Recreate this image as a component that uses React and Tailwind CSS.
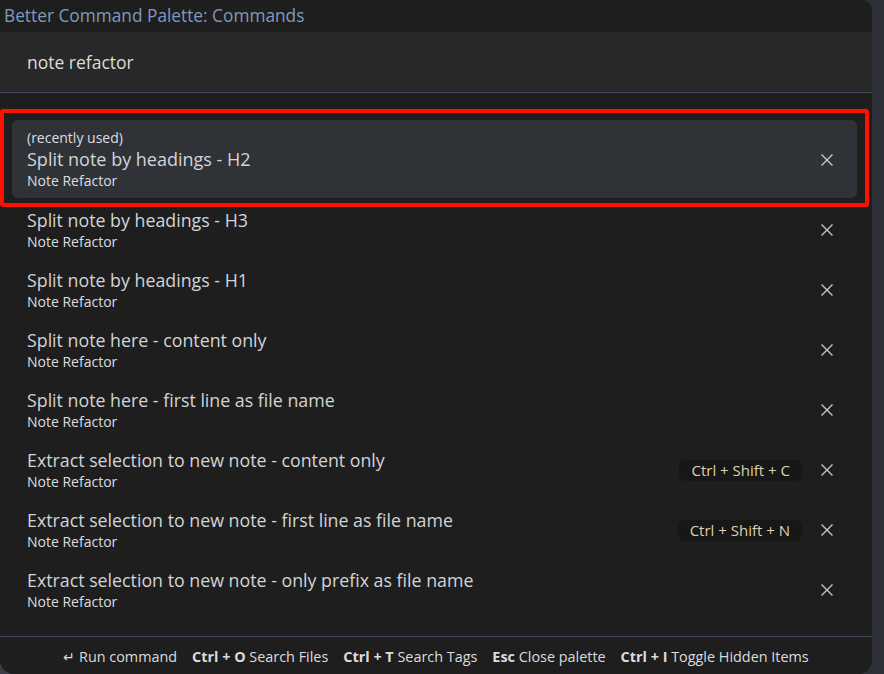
import React from 'react';

const items = [
  { title: 'Split note by headings - H3' },
  { title: 'Split note by headings - H1' },
  { title: 'Split note here - content only' },
  { title: 'Split note here - first line as file name' },
  { title: 'Extract selection to new note - content only', hotkey: 'Ctrl + Shift + C' },
  { title: 'Extract selection to new note - first line as file name', hotkey: 'Ctrl + Shift + N' },
  { title: 'Extract selection to new note - only prefix as file name' },
];

const CloseIcon = () => (
  <svg width="14" height="14" viewBox="0 0 14 14" className="shrink-0">
    <path d="M2 2 L12 12 M12 2 L2 12" stroke="#c4c4c4" strokeWidth="1.4" strokeLinecap="square" />
  </svg>
);

const Hotkey = ({ children }) => (
  <span className="rounded-md bg-[#171717] px-[12px] h-[21px] flex items-center text-[15px] text-[#ddd2ad] mr-[18px]">
    {children}
  </span>
);

const App = () => {
  return (
    <div
      className="w-[884px] h-[674px] bg-gradient-to-r from-[#3b3e46] to-[#2c2f35] overflow-hidden"
      style={{ fontFamily: '"Open Sans", "Noto Sans", sans-serif' }}
    >
      <div className="w-[872px] h-[674px] bg-[#1e1e1e] rounded-tr-[10px] rounded-b-[14px] flex flex-col">
        <div className="h-[32px] px-[4px] flex items-center text-[17.3px] text-[#7e9bbd]">
          Better Command Palette: Commands
        </div>

        <div className="h-[61px] bg-[#282828] border-b border-[#414a5a] flex items-center pl-[27px] text-[17.5px] text-[#dcdcdc]">
          note refactor
        </div>

        <div className="pl-[12px] pr-[15px] pt-[27px] pb-[18px] border-b border-[#414a5a]">
          <div className="relative h-[78px] rounded-md bg-[#2f3337] pl-[15px] pr-[23px] pt-[1px] flex items-center">
            <div className="absolute -left-[12px] -top-[11px] -right-[12px] -bottom-[9px] border-[4px] border-[#ff1100] rounded-[3px] pointer-events-none" />
            <div className="flex-1 flex flex-col text-[#dcdde0]">
              <span className="text-[14px] leading-[18px]">(recently used)</span>
              <span className="text-[18px] leading-[24px] text-[#d2d4d8]">Split note by headings - H2</span>
              <span className="text-[14px] leading-[20px]">Note Refactor</span>
            </div>
            <CloseIcon />
          </div>

          {items.map((item) => (
            <div key={item.title} className="h-[60px] pl-[15px] pr-[23px] pt-[10px] pb-[6px] flex items-center">
              <div className="flex-1 flex flex-col">
                <span className="text-[17.8px] leading-[24px] text-[#d2d4d8]">{item.title}</span>
                <span className="text-[14px] leading-[20px] text-[#dcdde0]">Note Refactor</span>
              </div>
              {item.hotkey && <Hotkey>{item.hotkey}</Hotkey>}
              <CloseIcon />
            </div>
          ))}
        </div>

        <div className="flex-1 flex items-center justify-center gap-[15px] text-[14.4px] text-[#dcdcdc] pt-[3px]">
          <span>↵ Run command</span>
          <span><b>Ctrl + O</b> Search Files</span>
          <span><b>Ctrl + T</b> Search Tags</span>
          <span><b>Esc</b> Close palette</span>
          <span><b>Ctrl + I</b> Toggle Hidden Items</span>
        </div>
      </div>
    </div>
  );
};

export default App;
